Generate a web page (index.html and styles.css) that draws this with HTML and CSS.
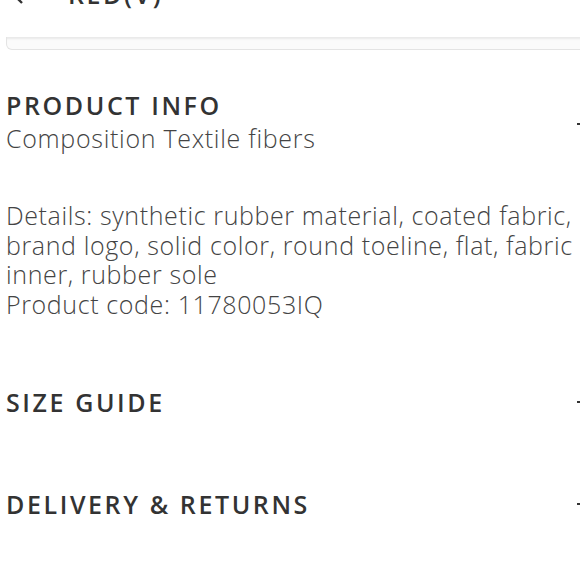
FILE: index.html
```html
<!DOCTYPE html>
<html>
<head>
<meta charset="utf-8">
<link rel="stylesheet" href="styles.css">
</head>
<body>
<div class="page">
  <header class="topbar">
    <span class="back">
      <svg width="14" height="22" viewBox="0 0 14 22"><path d="M12 2 L3 11 L12 20" fill="none" stroke="#333" stroke-width="2.4"/></svg>
    </span>
    <span class="title">RED(V)</span>
  </header>
  <div class="card"></div>

  <section class="acc open">
    <div class="acc-head">
      <div class="acc-titles">
        <h2 class="acc-title">PRODUCT INFO</h2>
        <p class="sub">Composition Textile fibers</p>
      </div>
      <span class="sign"></span>
    </div>
    <p class="body">Details: synthetic rubber material, coated fabric, brand logo, solid color, round toeline, flat, fabric inner, rubber sole<br>Product code: 11780053IQ</p>
  </section>

  <section class="acc">
    <div class="acc-head center">
      <h2 class="acc-title">SIZE GUIDE</h2>
      <span class="sign"></span>
    </div>
  </section>

  <section class="acc">
    <div class="acc-head center">
      <h2 class="acc-title">DELIVERY &amp; RETURNS</h2>
      <span class="sign"></span>
    </div>
  </section>
</div>
</body>
</html>
```
FILE: styles.css
```css
html, body {
  margin: 0;
  padding: 0;
  background: #fff;
  overflow: hidden;
}
body {
  width: 580px;
  height: 580px;
  font-family: "Open Sans", "Liberation Sans", sans-serif;
  color: #444;
}
.page {
  padding-left: 6px;
}
.topbar {
  display: flex;
  align-items: center;
  height: 40px;
  margin-top: -26px;
  gap: 44px;
  padding-left: 4px;
}
.back {
  display: flex;
}
.title {
  font-size: 25px;
  font-weight: 600;
  letter-spacing: 2.6px;
  color: #333;
}
.card {
  height: 12px;
  border: 1px solid #e4e4e4;
  border-top: none;
  border-radius: 0 0 6px 6px;
  margin-top: 23px;
  margin-right: -20px;
  background: #fbfbfb;
  box-shadow: inset 0 3px 2px -1px #e9e9e9;
}
.acc-head {
  display: flex;
  justify-content: space-between;
  align-items: center;
}
.acc-titles {
  display: flex;
  flex-direction: column;
}
.acc-title {
  margin: 0;
  font-size: 25px;
  font-weight: 600;
  letter-spacing: 2.6px;
  line-height: 30px;
  color: #333;
}
.sub {
  margin: 0;
  font-size: 25px;
  font-weight: 300;
  letter-spacing: 0.7px;
  line-height: 37px;
}
.sign {
  width: 14px;
  height: 2px;
  background: #333;
  margin-right: -11px;
  flex: none;
}
.acc.open .acc-head {
  margin-top: 40px;
}
.body {
  margin: 44px 0 0;
  font-size: 25px;
  font-weight: 300;
  letter-spacing: 0.62px;
  line-height: 29.5px;
}
.acc:nth-of-type(2) .acc-head {
  margin-top: 68px;
}
.acc:nth-of-type(3) .acc-head {
  margin-top: 72px;
}
```
